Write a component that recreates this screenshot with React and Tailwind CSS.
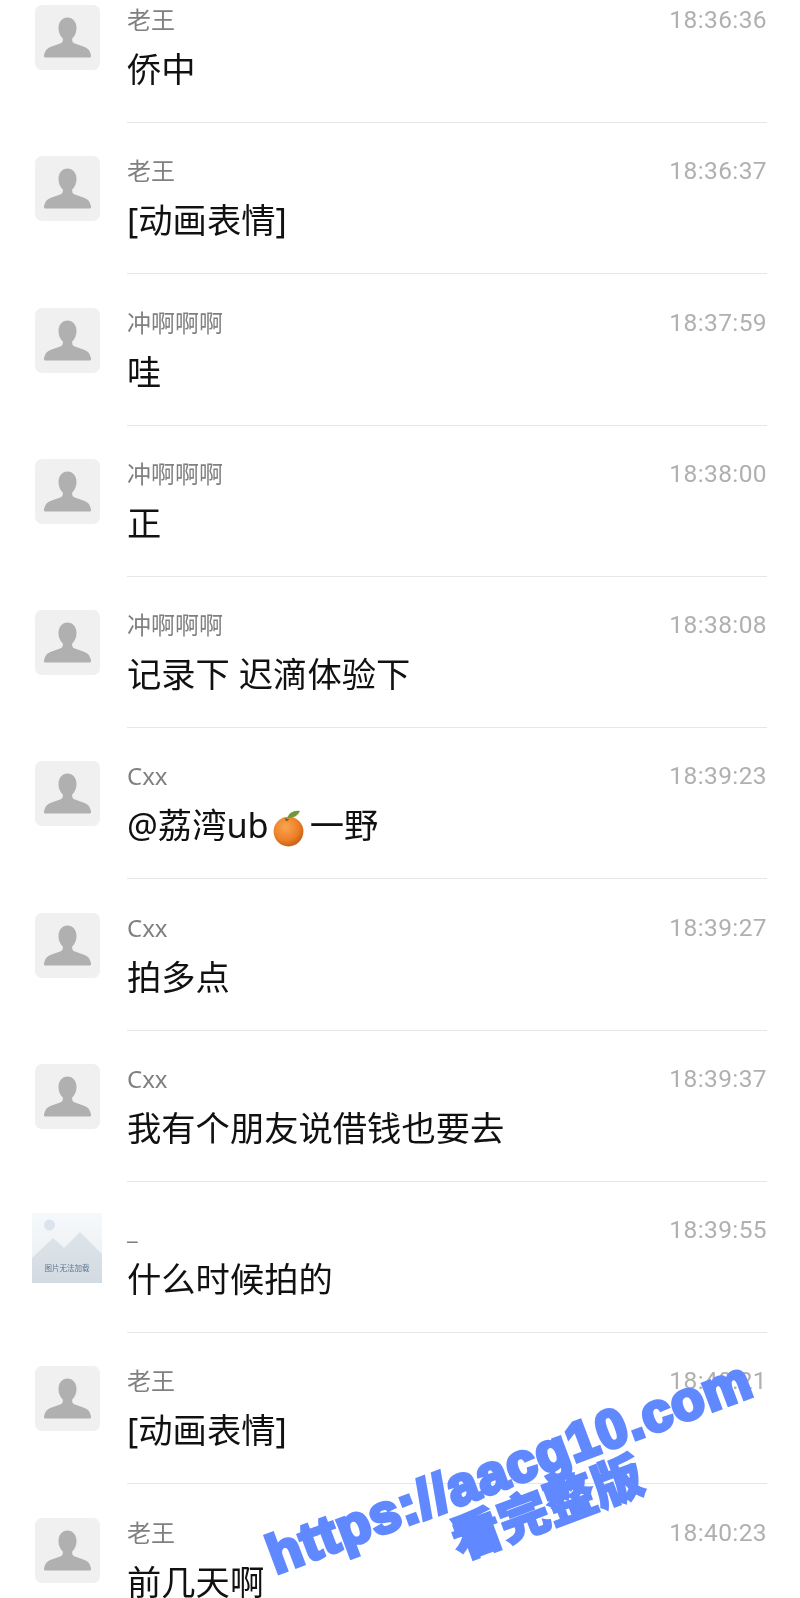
const CJK = `font-['Noto_Sans','Noto_Sans_CJK_SC',sans-serif]`;

function PersonAvatar() {
  return (
    <div className="w-[65px] h-[65px] shrink-0 rounded-[7px] bg-[#f0f0f0] flex items-center justify-center">
      <svg viewBox="0 0 65 65" className="w-[65px] h-[65px]">
        <path
          d="M32.500 12.500c-5.300 0-9 4.300-9 10.500 0 4.400 1.700 8.200 4.300 10.600v1.700c0 1.500-1 2.700-2.700 3.300l-9.800 3.500c-3.200 1.200-5.300 3.600-6.300 8.200-.3 1.500.4 2.300 1.800 2.300h43.400c1.400 0 2.100-.8 1.800-2.300-1-4.600-3.100-7-6.300-8.200l-9.800-3.500c-1.700-.6-2.700-1.800-2.700-3.300v-1.700c2.600-2.400 4.300-6.200 4.300-10.600 0-6.200-3.700-10.500-9-10.500z"
          fill="#b0b0b0"
        />
      </svg>
    </div>
  );
}

function PictureAvatar() {
  return (
    <div className="relative w-[70px] h-[70px] shrink-0 -ml-[3px] -mt-[2px] mr-[-2px] overflow-hidden bg-gradient-to-b from-[#f6f9fb] to-[#e8edf1]">
      <svg viewBox="0 0 70 70" className="w-[70px] h-[70px]">
        <defs>
          <linearGradient id="mount" x1="0" y1="0" x2="0" y2="1">
            <stop offset="0" stopColor="#dde4e9" />
            <stop offset="1" stopColor="#d3dbe2" />
          </linearGradient>
        </defs>
        <circle cx="17.500" cy="12" r="5.500" fill="#dbe3ec" />
        <path d="M0 45 L21 25 L32 35 L48 19 L70 41 V70 H0 Z" fill="url(#mount)" />
      </svg>
      <span className="absolute left-0 right-0 top-[50px] text-center text-[7.500px] leading-[10px] text-[#5f7690] font-['Noto_Sans_CJK_SC',sans-serif]">
        图片无法加载
      </span>
    </div>
  );
}

function Orange() {
  return (
    <svg viewBox="0 0 32 36" className="inline-block w-[33px] h-[37px] ml-[3px] mr-[5px] align-[-9px]">
      <defs>
        <radialGradient id="orangeFill" cx="0.4" cy="0.35" r="0.75">
          <stop offset="0" stopColor="#f9a650" />
          <stop offset="0.6" stopColor="#ec7f26" />
          <stop offset="1" stopColor="#b9560f" />
        </radialGradient>
      </defs>
      <circle cx="16" cy="21" r="14.500" fill="url(#orangeFill)" />
      <path d="M15 8 C16 3 21 0 27 1 C26 5 21 8 15 8 Z" fill="#6f9a3c" />
      <path d="M12 8 L17 9 L14 11 Z" fill="#4f6b2a" />
    </svg>
  );
}

const rows = [
  { name: "老王", time: "18:36:36", msg: "侨中" },
  { name: "老王", time: "18:36:37", msg: "[动画表情]" },
  { name: "冲啊啊啊", time: "18:37:59", msg: "哇" },
  { name: "冲啊啊啊", time: "18:38:00", msg: "正" },
  { name: "冲啊啊啊", time: "18:38:08", msg: "记录下 迟滴体验下" },
  { name: "Cxx", time: "18:39:23", msg: <>@荔湾ub<Orange />一野</> },
  { name: "Cxx", time: "18:39:27", msg: "拍多点" },
  { name: "Cxx", time: "18:39:37", msg: "我有个朋友说借钱也要去" },
  { name: "_", time: "18:39:55", msg: "什么时候拍的", picture: true },
  { name: "老王", time: "18:40:21", msg: "[动画表情]" },
  { name: "老王", time: "18:40:23", msg: "前几天啊" },
];

export default function App() {
  return (
    <div className={`relative w-[800px] h-[1598px] overflow-hidden bg-white ${CJK}`}>
      <div className="pt-[5px] blur-[0.4px]">
        {rows.map((r) => (
          <div key={r.time} className="flex h-[151.25px] pl-[35px] pr-[33px]">
            {r.picture ? <PictureAvatar /> : <PersonAvatar />}
            <div className="ml-[27px] flex-1 h-[118px] border-b border-[#e6e6e6]">
              <div className="flex justify-between h-[30px] leading-[30px]">
                <span className="text-[24px] text-[#808080]">{r.name}</span>
                <span className="font-['Roboto',sans-serif] text-[24.500px] tracking-[0.4px] text-[#b0b0b0]">{r.time}</span>
              </div>
              <div className="mt-[14px] text-[34.300px] leading-[40px] text-[#111111] whitespace-nowrap">{r.msg}</div>
            </div>
          </div>
        ))}
      </div>
      <div className="absolute left-[258px] top-[1437px] w-[520px] -rotate-[20.500deg] origin-center text-center text-[#6088ff] font-bold font-['Liberation_Sans','Noto_Sans_CJK_SC',sans-serif] [-webkit-text-stroke:4px_#6088ff]">
        <div className="text-[54px] leading-[56px] tracking-[1.300px] whitespace-nowrap">https://aacg10.com</div>
        <div className="pl-[42px] text-[50px] leading-[50px] font-black [-webkit-text-stroke:2px_#6088ff]">看完整版</div>
      </div>
    </div>
  );
}
